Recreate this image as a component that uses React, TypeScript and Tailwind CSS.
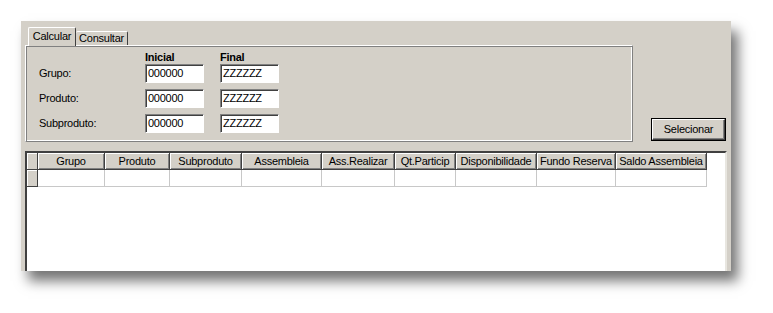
const columns = [
  { title: 'Grupo', width: 67 },
  { title: 'Produto', width: 65 },
  { title: 'Subproduto', width: 72 },
  { title: 'Assembleia', width: 80 },
  { title: 'Ass.Realizar', width: 73 },
  { title: 'Qt.Particip', width: 61 },
  { title: 'Disponibilidade', width: 81 },
  { title: 'Fundo Reserva', width: 79 },
  { title: 'Saldo Assembleia', width: 91 },
];

const rows = [
  { label: 'Grupo:', from: '000000', to: 'ZZZZZZ' },
  { label: 'Produto:', from: '000000', to: 'ZZZZZZ' },
  { label: 'Subproduto:', from: '000000', to: 'ZZZZZZ' },
];

function Field({ value }: { value: string }) {
  return (
    <div className="h-[19px] w-[59px] bg-white border-t border-l border-t-[#808080] border-l-[#808080] border-b border-r border-b-white border-r-white shadow-[inset_1px_1px_0_#404040] pl-[2px] leading-[17px]">
      {value}
    </div>
  );
}

export default function App() {
  return (
    <div
      className="w-[773px] h-[313px] bg-white pt-[21px] pl-[21px] text-[11px] tracking-[-0.25px] text-black"
      style={{ fontFamily: '"Liberation Sans", Arial, sans-serif' }}
    >
      <div className="w-[710px] h-[250px] bg-[#d4d0c8] shadow-[7px_10px_12px_rgba(0,0,0,0.55)] flex flex-col px-[4px] pt-[6px]">
        <div className="flex h-[115px]">
          <div className="w-[608px] flex flex-col">
            <div className="flex items-end h-[18px] pl-[3px]">
              <div className="relative z-10 h-[19px] -mb-px w-[48px] bg-[#d4d0c8] border-t border-l border-white border-r border-r-[#404040] rounded-t-[2px] text-center leading-[16px]">
                Calcular
              </div>
              <div className="h-[14px] w-[52px] bg-[#d4d0c8] border-t border-white border-r border-r-[#404040] rounded-t-[2px] text-center leading-[13px]">
                Consultar
              </div>
            </div>
            <div className="h-[97px] border-t border-l border-white border-b border-r border-b-[#808080] border-r-[#808080] shadow-[inset_1px_1px_0_#808080,inset_-1px_-1px_0_white] pl-[13px]">
              <div className="grid grid-cols-[106px_59px_16px_59px] h-[18px] items-end">
                <div />
                <div className="font-bold leading-[14px]">Inicial</div>
                <div />
                <div className="font-bold leading-[14px]">Final</div>
              </div>
              <div className="flex flex-col gap-[6px]">
                {rows.map((r) => (
                  <div key={r.label} className="flex">
                    <div className="w-[106px] leading-[19px]">{r.label}</div>
                    <Field value={r.from} />
                    <div className="w-[16px]" />
                    <Field value={r.to} />
                  </div>
                ))}
              </div>
            </div>
          </div>
          <div className="flex-1 flex items-end justify-end pr-[1px] pb-px">
            <div className="w-[75px] h-[23px] border border-black">
              <div className="h-full w-full border-t border-l border-white border-b border-r border-b-[#404040] border-r-[#404040] shadow-[inset_-1px_-1px_0_#808080] flex items-center justify-center">
                Selecionar
              </div>
            </div>
          </div>
        </div>

        <div className="mt-[9px] flex-1 bg-white border-t-2 border-l-2 border-t-[#404040] border-l-[#404040] border-r-2 border-r-[#e8e6e0] flex flex-col">
          <div className="flex h-[17px]">
            <div className="w-[11px] h-full bg-[#d4d0c8] border-r border-b border-[#404040] shadow-[inset_1px_1px_0_white]" />
            {columns.map((c) => (
              <div
                key={c.title}
                className="h-full bg-[#d4d0c8] border-r border-b border-[#404040] shadow-[inset_1px_1px_0_white,inset_-1px_-1px_0_#808080] flex items-center justify-center whitespace-nowrap overflow-hidden"
                style={{ width: c.width }}
              >
                {c.title}
              </div>
            ))}
          </div>
          <div className="flex h-[17px]">
            <div className="w-[11px] h-full bg-[#d4d0c8] border-r border-b border-[#404040] shadow-[inset_1px_1px_0_white]" />
            {columns.map((c) => (
              <div
                key={c.title}
                className="h-full bg-white border-r border-b border-[#c8c8c8]"
                style={{ width: c.width }}
              />
            ))}
          </div>
        </div>
      </div>
    </div>
  );
}
